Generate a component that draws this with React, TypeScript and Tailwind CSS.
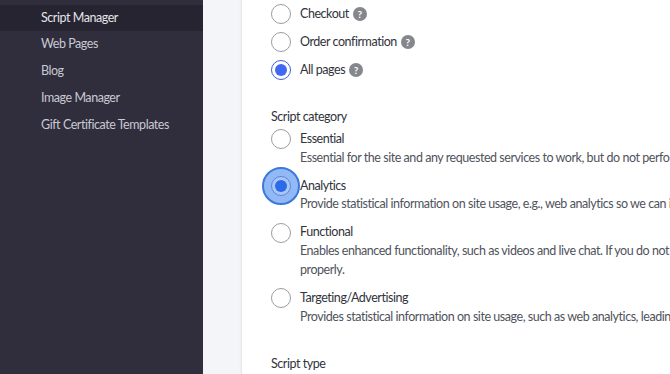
import React from "react";

const font = { fontFamily: "Lato, 'Open Sans', sans-serif" };

function Help() {
  return (
    <span className="ml-[4px] inline-flex h-[14px] w-[14px] items-center justify-center rounded-full bg-[#85878c] text-[10px] font-bold leading-none tracking-normal text-white">
      ?
    </span>
  );
}

function Radio({ checked = false, focus = false }: { checked?: boolean; focus?: boolean }) {
  if (focus) {
    return (
      <span className="relative flex h-[20px] w-[20px] shrink-0 items-center justify-center">
        <span className="absolute left-1/2 top-1/2 h-[38px] w-[38px] -translate-x-1/2 -translate-y-1/2 rounded-full border-2 border-[#3b79d9] bg-[#92b8f6]" />
        <span className="relative flex h-[20px] w-[20px] items-center justify-center rounded-full border border-[#5a86dc] bg-[#a8c6f9]">
          <span className="h-[12px] w-[12px] rounded-full bg-[#2d6ae8]" />
        </span>
      </span>
    );
  }
  if (checked) {
    return (
      <span className="flex h-[20px] w-[20px] shrink-0 items-center justify-center rounded-full border-[1.5px] border-[#3d5fd4] bg-white">
        <span className="h-[12px] w-[12px] rounded-full bg-[#4268f2]" />
      </span>
    );
  }
  return <span className="h-[20px] w-[20px] shrink-0 rounded-full border border-[#9b9da3] bg-white" />;
}

function SimpleRow({ label, checked }: { label: string; checked?: boolean }) {
  return (
    <div className="flex h-[28px] items-center">
      <Radio checked={checked} />
      <span className="ml-[9px] text-[12.5px] tracking-[-0.45px] text-[#30333b]">{label}</span>
      <Help />
    </div>
  );
}

function CategoryRow({
  label,
  desc,
  focus,
}: {
  label: string;
  desc: React.ReactNode;
  focus?: boolean;
}) {
  return (
    <div className="flex items-start">
      <div className="flex h-[18.7px] items-center">
        <Radio focus={focus} />
      </div>
      <div className="ml-[9px] whitespace-nowrap text-[12.5px] leading-[18.7px] tracking-[-0.45px]">
        <div className="text-[#30333b]">{label}</div>
        <div className="text-[#4f535c]">{desc}</div>
      </div>
    </div>
  );
}

export default function App() {
  const nav = ["Script Manager", "Web Pages", "Blog", "Image Manager", "Gift Certificate Templates"];
  return (
    <div className="flex h-[374px] w-[670px] overflow-hidden bg-[#f4f5f8]" style={font}>
      <aside className="w-[203px] shrink-0 bg-[#302e3d] pt-[4.5px]">
        {nav.map((n, i) => (
          <div
            key={n}
            className={
              "flex h-[26.8px] items-center pl-[41px] text-[12.5px] tracking-[-0.45px] " +
              (i === 0 ? "bg-[#262430] text-[#e4e4ea]" : "text-[#c9c9d2]")
            }
          >
            {n}
          </div>
        ))}
      </aside>
      <div className="w-[38px] shrink-0" />
      <main className="min-w-0 flex-1 overflow-hidden border-l border-[#e6e7ec] bg-white pl-[29px] shadow-[0_0_3px_rgba(0,0,0,0.06)]">
        <div>
          <SimpleRow label="Checkout" />
          <SimpleRow label="Order confirmation" />
          <SimpleRow label="All pages" checked />
        </div>
        <div className="mt-[24px] text-[12.5px] leading-[18.7px] tracking-[-0.45px] text-[#30333b]">Script category</div>
        <div className="mt-[3.3px] flex flex-col gap-[9.3px]">
          <CategoryRow
            label="Essential"
            desc="Essential for the site and any requested services to work, but do not perform any additional or secondary function."
          />
          <CategoryRow
            label="Analytics"
            focus
            desc="Provide statistical information on site usage, e.g., web analytics so we can improve this website over time."
          />
          <CategoryRow
            label="Functional"
            desc={
              <>
                Enables enhanced functionality, such as videos and live chat. If you do not allow these, then some or all of these functions may not work
                <br />
                properly.
              </>
            }
          />
          <CategoryRow
            label="Targeting/Advertising"
            desc="Provides statistical information on site usage, such as web analytics, leading to more relevant advertising."
          />
        </div>
        <div className="mt-[28.7px] text-[12.5px] leading-[18.7px] tracking-[-0.45px] text-[#30333b]">Script type</div>
      </main>
    </div>
  );
}
